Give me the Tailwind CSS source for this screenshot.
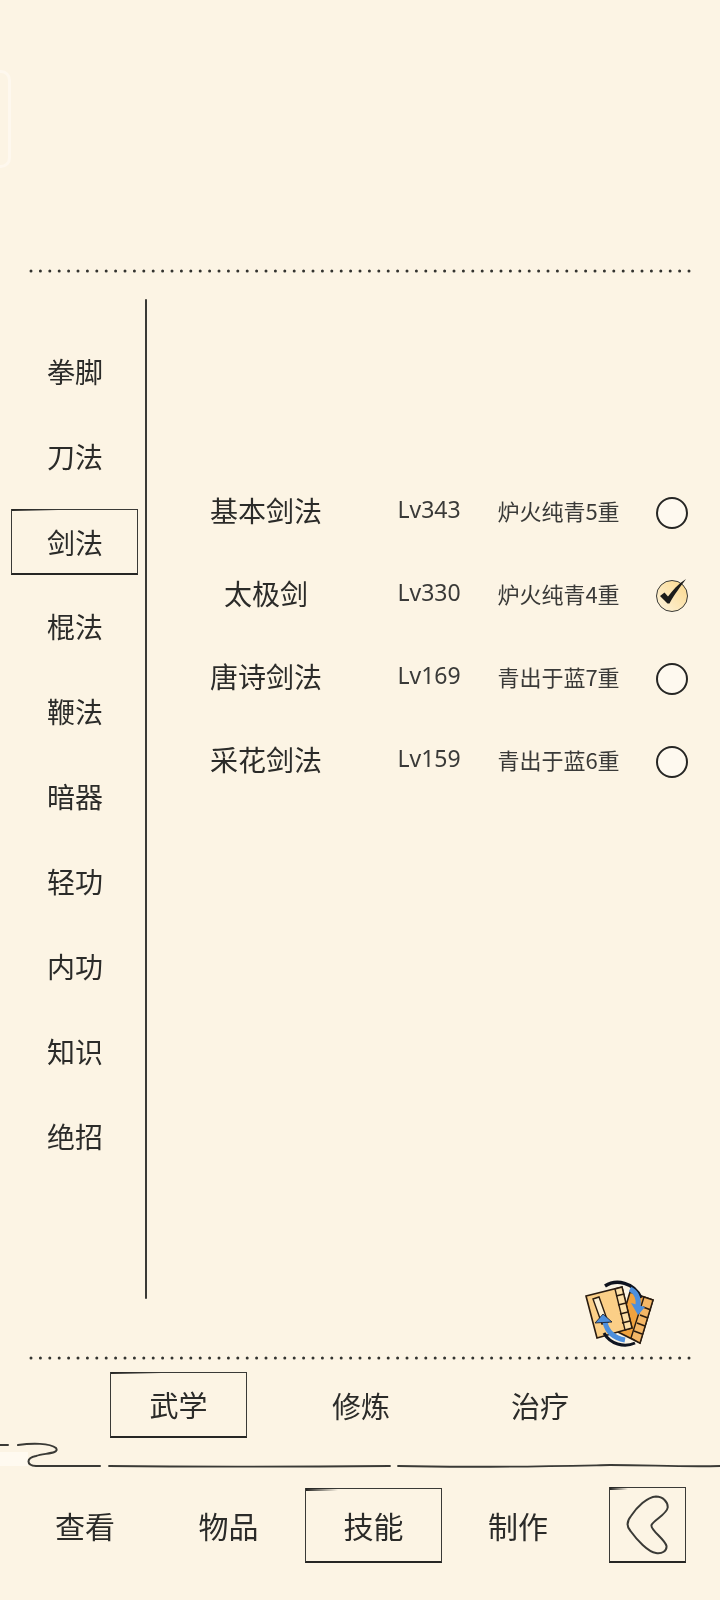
<!DOCTYPE html>
<html lang="zh"><head><meta charset="utf-8"><script src="https://cdn.jsdelivr.net/npm/@tailwindcss/browser@4"></script></head>
<body class="m-0">
<div class="relative w-[720px] h-[1600px] overflow-hidden bg-[#fcf4e4] text-[#2b2b29] font-['Noto_Sans_CJK_SC','Noto_Sans',sans-serif] flex flex-col blur-[0.4px]">
  <div class="absolute left-[-20px] top-[70px] w-[31px] h-[98px] rounded-[10px] border-[3px] border-[#fef8ee]"></div>
  <div class="h-[269px] shrink-0"></div>
  <svg class="ml-[29px] shrink-0" width="664" height="4" viewBox="0 0 664 4"><line x1="2" y1="2" x2="662" y2="2" stroke="#33332f" stroke-width="3" stroke-linecap="round" stroke-dasharray="0 9.4"/></svg>

  <div class="h-[1083px] shrink-0 flex">
    <nav class="w-[145px] shrink-0 pt-[55px] pl-[11px] flex flex-col">
      <div class="w-[127px] h-[85px] flex items-center justify-center text-[28px] leading-none pl-[1px]">拳脚</div>
      <div class="w-[127px] h-[85px] flex items-center justify-center text-[28px] leading-none pl-[1px]">刀法</div>
      <div class="w-[127px] h-[85px] flex items-center justify-center">
        <div class="relative mt-[2px] w-[127px] h-[66px] flex items-center justify-center text-[28px] leading-none pl-[1px] pt-[1px] border border-[#3a3a36] border-b-2 border-b-[#262624]">剑法<span class="absolute left-0 top-[-1px] w-[46px] h-[2px] bg-linear-to-r from-[#262624] to-transparent"></span></div>
      </div>
      <div class="w-[127px] h-[85px] flex items-center justify-center text-[28px] leading-none pl-[1px]">棍法</div>
      <div class="w-[127px] h-[85px] flex items-center justify-center text-[28px] leading-none pl-[1px]">鞭法</div>
      <div class="w-[127px] h-[85px] flex items-center justify-center text-[28px] leading-none pl-[1px]">暗器</div>
      <div class="w-[127px] h-[85px] flex items-center justify-center text-[28px] leading-none pl-[1px]">轻功</div>
      <div class="w-[127px] h-[85px] flex items-center justify-center text-[28px] leading-none pl-[1px]">内功</div>
      <div class="w-[127px] h-[85px] flex items-center justify-center text-[28px] leading-none pl-[1px]">知识</div>
      <div class="w-[127px] h-[85px] flex items-center justify-center text-[28px] leading-none pl-[1px]">绝招</div>
    </nav>
    <div class="w-[2px] h-[1000px] mt-[26px] shrink-0 bg-[#3a3a36] rounded-full"></div>
    <section class="flex-1 pt-[195px] pl-[25px] relative">
      <div class="h-[83px] flex items-center">
        <div class="w-[188px] text-center text-[28px] leading-none">基本剑法</div>
        <div class="ml-[23px] w-[92px] text-center text-[23px] leading-none font-['Noto_Sans',sans-serif] text-[#3a3a38]">Lv343</div>
        <div class="w-[127px] text-center text-[22px] leading-none text-[#3a3a38] ml-[20px]">炉火纯青5重</div>
        <span class="ml-[34px] w-[32px] h-[32px] rounded-full border-2 border-[#262624] bg-[#fef9ef] mt-[6px]"></span>
      </div>
      <div class="h-[83px] flex items-center">
        <div class="w-[188px] text-center text-[28px] leading-none">太极剑</div>
        <div class="ml-[23px] w-[92px] text-center text-[23px] leading-none font-['Noto_Sans',sans-serif] text-[#3a3a38]">Lv330</div>
        <div class="w-[127px] text-center text-[22px] leading-none text-[#3a3a38] ml-[20px]">炉火纯青4重</div>
        <span class="relative ml-[34px] w-[32px] h-[32px] rounded-full border-[1.5px] border-[#3a3a36] bg-linear-to-tr from-[#fdf3dc] to-[#fbd88a] mt-[6px]">
          <svg class="absolute left-[1px] top-[-10px]" width="32" height="40" viewBox="0 0 32 40"><path d="M2 25 L6.5 21.5 L10 25.5 C14 20 20 13 28 8 C23 15 16 24 11.5 32.5 L9.5 32.5 Z" fill="#1c1c1a"/></svg>
        </span>
      </div>
      <div class="h-[83px] flex items-center">
        <div class="w-[188px] text-center text-[28px] leading-none">唐诗剑法</div>
        <div class="ml-[23px] w-[92px] text-center text-[23px] leading-none font-['Noto_Sans',sans-serif] text-[#3a3a38]">Lv169</div>
        <div class="w-[127px] text-center text-[22px] leading-none text-[#3a3a38] ml-[20px]">青出于蓝7重</div>
        <span class="ml-[34px] w-[32px] h-[32px] rounded-full border-2 border-[#262624] bg-[#fef9ef] mt-[6px]"></span>
      </div>
      <div class="h-[83px] flex items-center">
        <div class="w-[188px] text-center text-[28px] leading-none">采花剑法</div>
        <div class="ml-[23px] w-[92px] text-center text-[23px] leading-none font-['Noto_Sans',sans-serif] text-[#3a3a38]">Lv159</div>
        <div class="w-[127px] text-center text-[22px] leading-none text-[#3a3a38] ml-[20px]">青出于蓝6重</div>
        <span class="ml-[34px] w-[32px] h-[32px] rounded-full border-2 border-[#262624] bg-[#fef9ef] mt-[6px]"></span>
      </div>
      <svg class="absolute left-[437px] top-[1007px]" width="72" height="68" viewBox="0 0 72 68">
        <path d="M46 12 L69 20 L56 63 L34 52 Z" fill="#f0a23e" stroke="#2a1c10" stroke-width="1.6"/>
        <path d="M60 17 L69 20 L56 63 L47 58 Z" fill="#f5b766" stroke="#2a1c10" stroke-width="1.4"/>
        <path d="M59 27 L67 30 M56 35 L64 38 M53 43 L61 46 M50 51 L58 54" stroke="#2a1c10" stroke-width="1.6"/>
        <path d="M2 16 L38 7 L48 48 L13 58 Z" fill="#fbcf87" stroke="#2a1c10" stroke-width="1.6"/>
        <path d="M31 9 L38 7 L48 48 L41 50 Z" fill="#fde0a8" stroke="#2a1c10" stroke-width="1.4"/>
        <path d="M32 16 L40 14 M34 25 L42 23 M36 34 L44 32 M38 43 L46 41" stroke="#2a1c10" stroke-width="1.6"/>
        <path d="M9 19 L15 17 L24 42 L18 44 Z" fill="#fdf0d2" stroke="#2a1c10" stroke-width="1.4"/>
        <path d="M21 6 C32 -1 50 2 57 18" fill="none" stroke="#10141f" stroke-width="3.5"/>
        <path d="M46 9 C52 12 55 18 54 26" fill="none" stroke="#4d8fdc" stroke-width="5"/>
        <path d="M47 23 L61 27 L54 35 Z" fill="#4d8fdc"/>
        <path d="M51 63 C40 68 26 64 20 53" fill="none" stroke="#10141f" stroke-width="3"/>
        <path d="M21 42 C23 52 30 58 41 60" fill="none" stroke="#4d8fdc" stroke-width="5"/>
        <path d="M11 43 L19 34 L28 42 Z" fill="#4d8fdc" stroke="#10141f" stroke-width="0.8"/>
      </svg>
    </section>
  </div>

  <svg class="ml-[29px] shrink-0" width="664" height="4" viewBox="0 0 664 4"><line x1="2" y1="2" x2="662" y2="2" stroke="#33332f" stroke-width="3" stroke-linecap="round" stroke-dasharray="0 9.4"/></svg>

  <div class="h-[66px] mt-[12px] shrink-0 flex items-center pl-[110px]">
    <div class="relative w-[137px] h-[66px] flex items-center justify-center text-[29px] leading-none border border-[#3a3a36] border-b-2 border-b-[#262624]">武学<span class="absolute left-0 top-[-1px] w-[50px] h-[2px] bg-linear-to-r from-[#262624] to-transparent"></span></div>
    <div class="w-[228px] text-center text-[29px] leading-none">修炼</div>
    <div class="w-[130px] text-center text-[29px] leading-none">治疗</div>
  </div>

  <div class="relative shrink-0 mt-[2px] h-[30px]">
    <div class="absolute left-0 top-[12px] w-[28px] h-[14px] bg-[#fffaf0]"></div>
    <svg class="absolute left-0 top-0" width="720" height="30" viewBox="0 0 720 30" fill="none" stroke="#3a3a36" stroke-linecap="round"><path d="M0 5 L8 5 M18 5 C32 3 50 3 56 8 C60 14 44 13 36 16 C26 18 26 25 36 26 L100 26" stroke-width="2"/><path d="M109 26 C200 27 260 27 390 26 M398 26 C480 28 560 26 610 25 C650 25 680 27 720 26" stroke-width="1.8"/></svg>
  </div>

  <div class="h-[76px] mt-[17px] shrink-0 flex items-center">
    <div class="w-[144px] pl-[26px] text-center text-[30px] leading-none shrink-0">查看</div>
    <div class="ml-[22px] w-[127px] pr-[2px] text-center text-[30px] leading-none shrink-0">物品</div>
    <div class="relative w-[137px] ml-[12px] h-[75px] flex items-center justify-center text-[30px] leading-none border border-[#3a3a36] border-b-2 border-b-[#262624] shrink-0">技能<span class="absolute left-0 top-[-1px] w-[32px] h-[3px] bg-linear-to-r from-[#262624] to-transparent"></span></div>
    <div class="w-[152px] text-center text-[30px] leading-none shrink-0">制作</div>
    <div class="relative ml-[15px] w-[77px] h-[76px] border border-[#3a3a36] border-b-2 border-b-[#262624] flex items-center justify-center shrink-0">
      <span class="absolute left-0 top-[-1px] w-[18px] h-[3px] bg-linear-to-r from-[#262624] to-transparent"></span>
      <svg width="50" height="62" viewBox="0 0 50 62" fill="none"><path d="M33 2.5 C40 2.5 45 8 44.7 13.5 C44 20 31 26 28.5 31 C27 36 42 45 43.5 52 C44 57 39 60 33 59 C25 58 14 46 7.5 37 C3 32 4 27 8 22 C14 13 24 3 33 2.5 Z" stroke="#3a3a36" stroke-width="2"/></svg>
    </div>
  </div>
</div>
</body></html>
